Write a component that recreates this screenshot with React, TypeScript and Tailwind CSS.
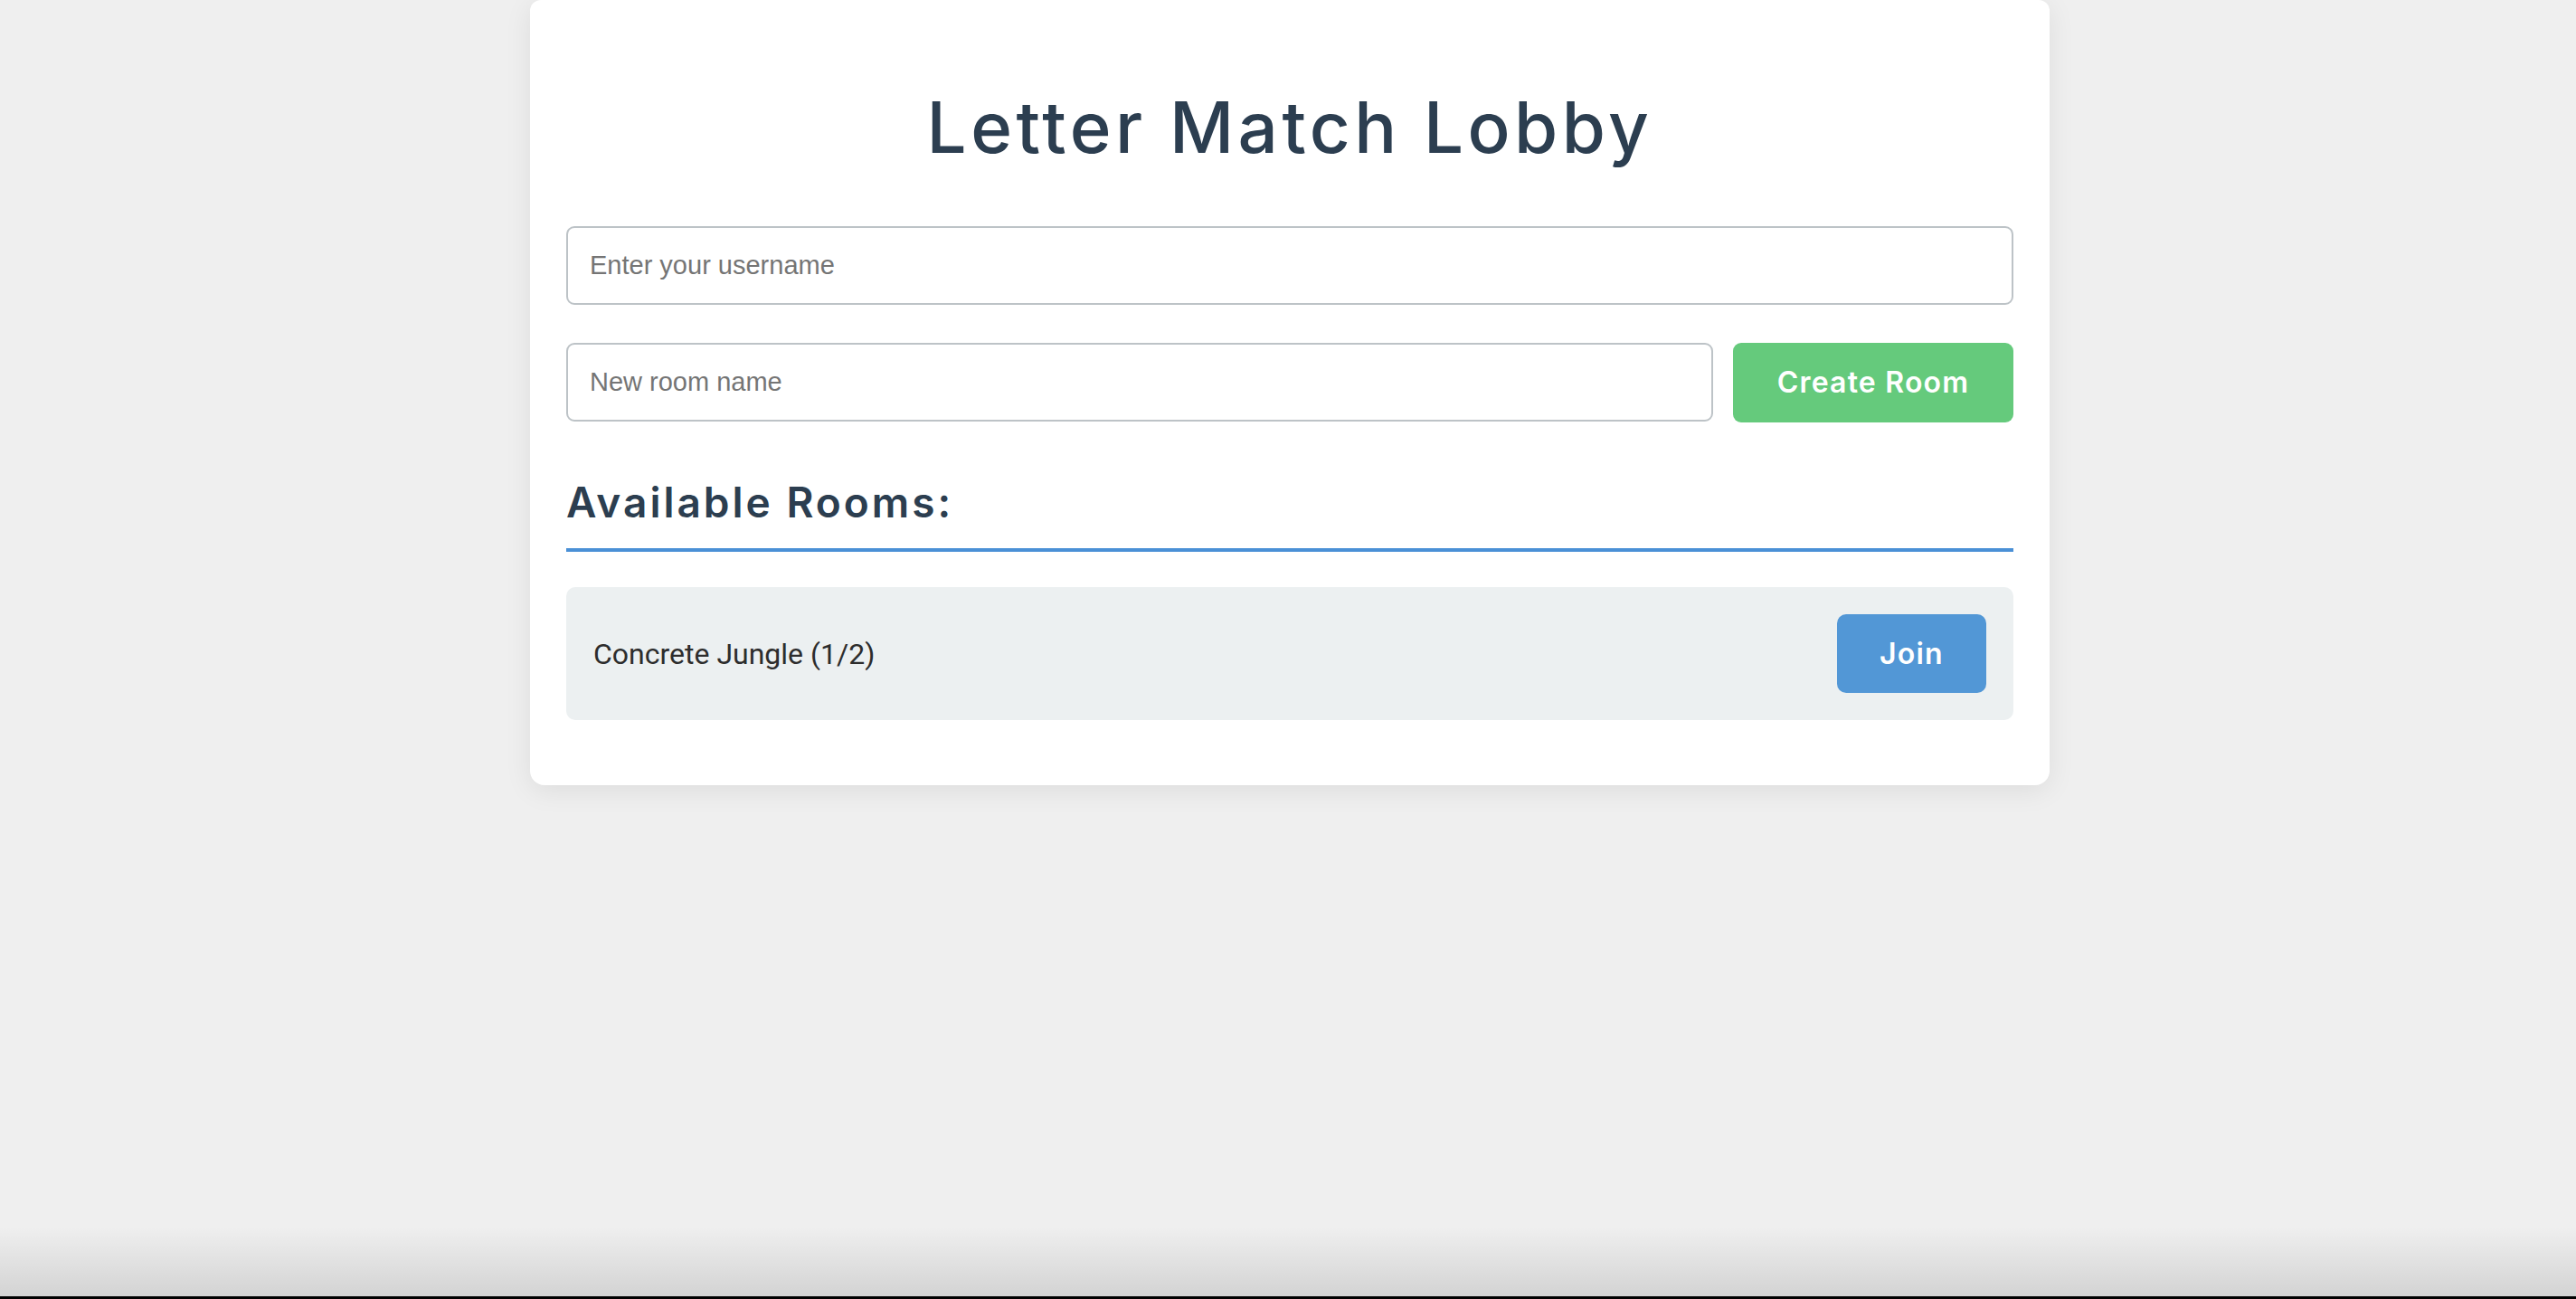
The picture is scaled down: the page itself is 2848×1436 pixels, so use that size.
import { useState } from 'react'

type Room = {
  id: string
  name: string
  players: number
  maxPlayers: number
}

const rooms: Room[] = [{ id: 'r1', name: 'Concrete Jungle', players: 1, maxPlayers: 2 }]

export default function App() {
  const [username, setUsername] = useState('')
  const [roomName, setRoomName] = useState('')

  return (
    <div className="relative min-h-screen bg-[#efefef] flex justify-center overflow-hidden">
      <div className="ml-[4px] w-[1680px] self-start bg-white rounded-b-[16px] rounded-t-[12px] shadow-[0_6px_30px_rgba(0,0,0,0.08)] px-[40px] pt-[102px] pb-[72px]">
        {/* Title */}
        <h1 className="text-center text-[78px] leading-none font-medium tracking-[4.5px] text-[#2c3e50] font-['Inter',sans-serif]">
          Letter Match Lobby
        </h1>

        {/* Username */}
        <input
          type="text"
          value={username}
          onChange={(e) => setUsername(e.target.value)}
          placeholder="Enter your username"
          className="mt-[70px] block w-full h-[87px] px-[24px] border-2 border-[#bdc3c7] rounded-[9px] text-[29px] text-[#333] placeholder:text-[#757575] font-['Liberation_Sans',Arial,sans-serif] outline-none"
        />

        {/* New room */}
        <div className="mt-[42px] flex gap-[22px]">
          <input
            type="text"
            value={roomName}
            onChange={(e) => setRoomName(e.target.value)}
            placeholder="New room name"
            className="flex-1 h-[87px] px-[24px] border-2 border-[#bdc3c7] rounded-[9px] text-[29px] text-[#333] placeholder:text-[#757575] font-['Liberation_Sans',Arial,sans-serif] outline-none"
          />
          <button className="w-[310px] h-[88px] bg-[#65ca7c] text-white rounded-[9px] text-[32px] font-semibold tracking-[1.2px] font-['Inter',sans-serif]">
            Create Room
          </button>
        </div>

        {/* Rooms */}
        <h2 className="mt-[65px] pb-[28px] border-b-4 border-[#4a90d6] text-[46px] leading-none font-semibold tracking-[3px] text-[#2c3e50] font-['Inter',sans-serif]">
          Available Rooms:
        </h2>

        <ul className="mt-[39px] flex flex-col gap-[20px]">
          {rooms.map((room) => (
            <li
              key={room.id}
              className="flex items-center justify-between bg-[#ecf0f1] rounded-[10px] p-[30px]"
            >
              <span className="text-[32px] text-[#2d2d2d] font-['Roboto',sans-serif]">
                {room.name} ({room.players}/{room.maxPlayers})
              </span>
              <button className="w-[165px] h-[87px] bg-[#5297d6] text-white rounded-[10px] text-[32px] font-semibold tracking-[1.2px] font-['Inter',sans-serif]">
                Join
              </button>
            </li>
          ))}
        </ul>
      </div>

      {/* window edge shadow at the bottom of the capture */}
      <div className="pointer-events-none absolute left-0 right-0 bottom-0 h-[80px] bg-gradient-to-b from-transparent to-[rgba(0,0,0,0.12)]" />
      <div className="pointer-events-none absolute left-0 right-0 bottom-0 h-[3px] bg-black" />
    </div>
  )
}
